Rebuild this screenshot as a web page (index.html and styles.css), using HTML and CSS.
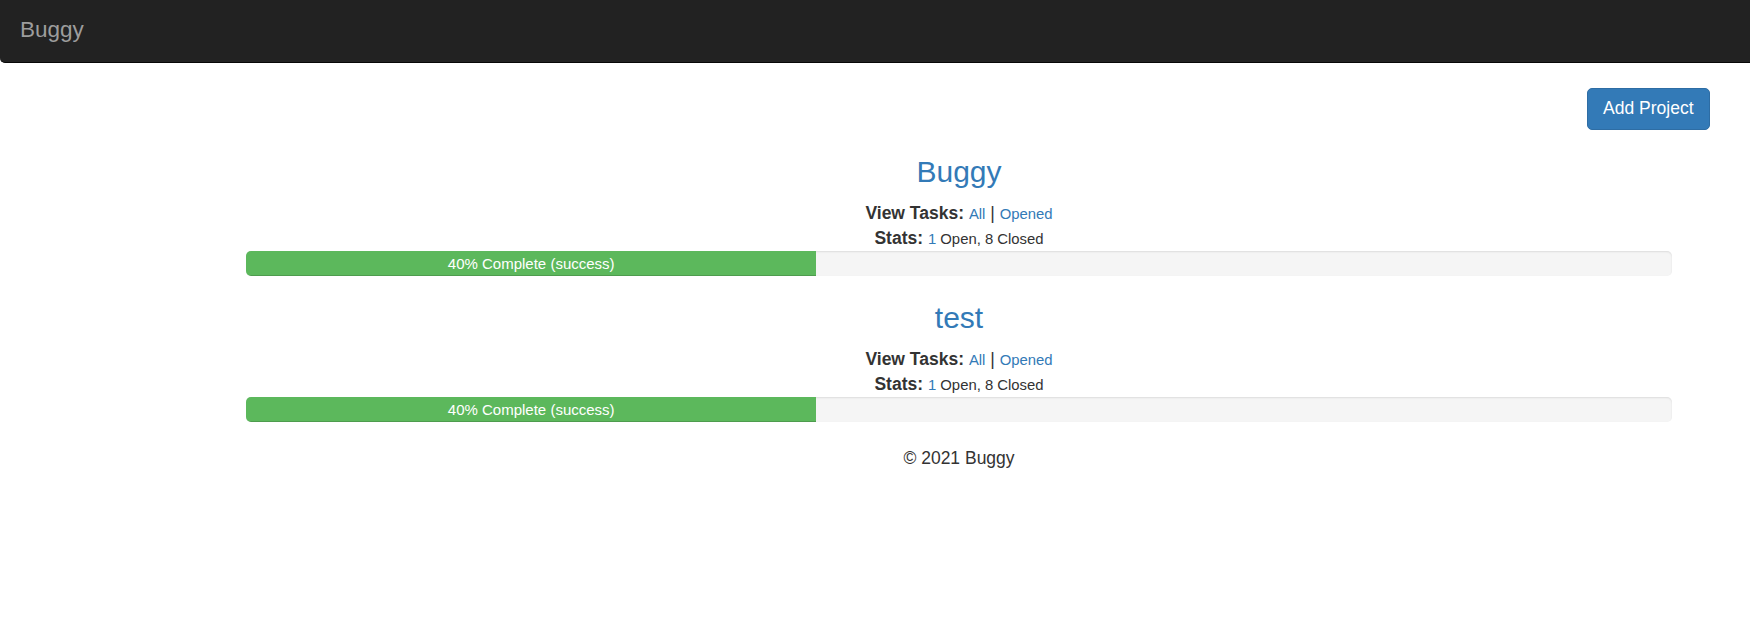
FILE: index.html
```html
<!DOCTYPE html>
<html lang="en">
<head>
<meta charset="utf-8">
<title>Buggy</title>
<link rel="stylesheet" href="styles.css">
</head>
<body>
<nav class="navbar">
  <a class="brand" href="#">Buggy</a>
</nav>
<div class="toolbar">
  <a class="btn" href="#">Add Project</a>
</div>
<main class="content">
  <section class="project">
    <h3 class="project-title"><a href="#">Buggy</a></h3>
    <div class="line"><strong>View Tasks:</strong> <small><a href="#">All</a></small> | <small><a href="#">Opened</a></small></div>
    <div class="line"><strong>Stats:</strong> <small><a href="#">1</a> Open, 8 Closed</small></div>
    <div class="progress"><div class="progress-bar" style="width: 40%">40% Complete (success)</div></div>
  </section>
  <section class="project">
    <h3 class="project-title"><a href="#">test</a></h3>
    <div class="line"><strong>View Tasks:</strong> <small><a href="#">All</a></small> | <small><a href="#">Opened</a></small></div>
    <div class="line"><strong>Stats:</strong> <small><a href="#">1</a> Open, 8 Closed</small></div>
    <div class="progress"><div class="progress-bar" style="width: 40%">40% Complete (success)</div></div>
  </section>
  <footer class="footer">
    <p>&copy; 2021 Buggy</p>
  </footer>
</main>
</body>
</html>
```
FILE: styles.css
```css
html, body {
  margin: 0;
  padding: 0;
  background: #fff;
}

body {
  font-family: "Liberation Sans", Arial, Helvetica, sans-serif;
  font-size: 17.5px;
  line-height: 25px;
  color: #333;
}

a {
  color: #337ab7;
  text-decoration: none;
}

.navbar {
  height: 61.5px;
  background: #222;
  border-bottom: 1px solid #080808;
  border-radius: 0 0 0 5px;
  display: flex;
  align-items: flex-start;
  margin-bottom: 25px;
}

.brand {
  color: #9d9d9d;
  font-size: 22.5px;
  line-height: 25px;
  padding: 16.5px 20px 0 20px;
}

.toolbar {
  display: flex;
  justify-content: flex-end;
  padding-right: 40.5px;
}

.btn {
  display: inline-block;
  padding: 7.5px 15px;
  font-size: 17.5px;
  line-height: 25px;
  color: #fff;
  background: #337ab7;
  border: 1.25px solid #2e6da4;
  border-radius: 5px;
}

.content {
  margin-left: 246px;
  width: 1426px;
  text-align: center;
}

.project-title {
  margin: 25px 0 13px;
  font-size: 30px;
  line-height: 33px;
  font-weight: 500;
}

.line {
  height: 25px;
}

.line strong {
  font-weight: 700;
}

.line small {
  font-size: 85%;
  line-height: 1;
}

.progress {
  height: 25px;
  margin-bottom: 24px;
  background: #f5f5f5;
  border-radius: 5px;
  overflow: hidden;
  box-shadow: inset 0 1px 2px rgba(0, 0, 0, 0.1);
  text-align: left;
}

.progress-bar {
  height: 100%;
  background: #5cb85c;
  color: #fff;
  font-size: 15px;
  line-height: 25px;
  text-align: center;
  box-shadow: inset 0 -1px 0 rgba(0, 0, 0, 0.15);
}

.footer p {
  margin: 0;
  font-size: 17.5px;
  line-height: 25px;
}
```
